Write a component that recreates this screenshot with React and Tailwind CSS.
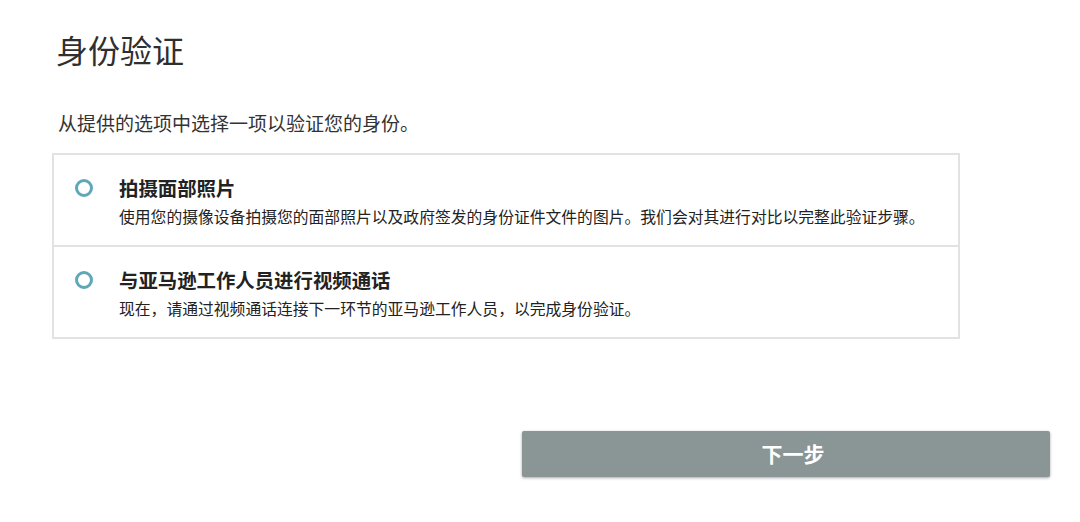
import React from 'react'
import {useState} from 'react'

const options = [
    {
        id: "photo",
        title: "拍摄面部照片",
        desc: "使用您的摄像设备拍摄您的面部照片以及政府签发的身份证件文件的图片。我们会对其进行对比以完整此验证步骤。",
    },
    {
        id: "video",
        title: "与亚马逊工作人员进行视频通话",
        desc: "现在，请通过视频通话连接下一环节的亚马逊工作人员，以完成身份验证。",
    },
]

function App() {
    const [selected, setSelected] = useState(null)

    return (
        <div className="min-h-[522px] bg-white text-[#333] font-['Noto_Sans_CJK_SC','Noto_Sans',sans-serif] pl-[52px] pt-[29px]">
            <h1 className="text-[32px] leading-[40px] font-normal pl-[4px] text-[#2f2f2f]">
                身份验证
            </h1>
            <p className="text-[19px] leading-[24px] mt-[42px] pl-[6px] text-[#333]">
                从提供的选项中选择一项以验证您的身份。
            </p>

            <div className="w-[908px] mt-[18px] border-2 border-[#e2e2e2]">
                {options.map((opt, i) => (
                    <label
                        key={opt.id}
                        onClick={() => setSelected(opt.id)}
                        className={"flex items-start cursor-pointer pt-[20px] pb-[18px] " + (i > 0 ? "border-t-2 border-[#e2e2e2]" : "")}
                    >
                        <span className="w-[65px] shrink-0 pl-[21px] pt-[4px]">
                            <span className="w-[18px] h-[18px] rounded-full border-[3px] border-[#5ea8b7] bg-white flex items-center justify-center">
                                {selected === opt.id && <span className="w-[6px] h-[6px] rounded-full bg-[#5ea8b7]"></span>}
                            </span>
                        </span>
                        <span className="flex flex-col gap-[7px]">
                            <span className="text-[19.4px] leading-[25px] font-bold text-[#222]">{opt.title}</span>
                            <span className="text-[15.8px] leading-[20px] text-[#222]">{opt.desc}</span>
                        </span>
                    </label>
                ))}
            </div>

            <div className="flex justify-end pr-[30px] mt-[92px]">
                <button className="w-[528px] h-[46px] pl-[14px] bg-[#8a9595] text-white text-[21px] font-bold rounded-[2px] shadow-[0_1px_3px_rgba(0,0,0,0.35)]">
                    下一步
                </button>
            </div>
        </div>
    )
}

export default App
